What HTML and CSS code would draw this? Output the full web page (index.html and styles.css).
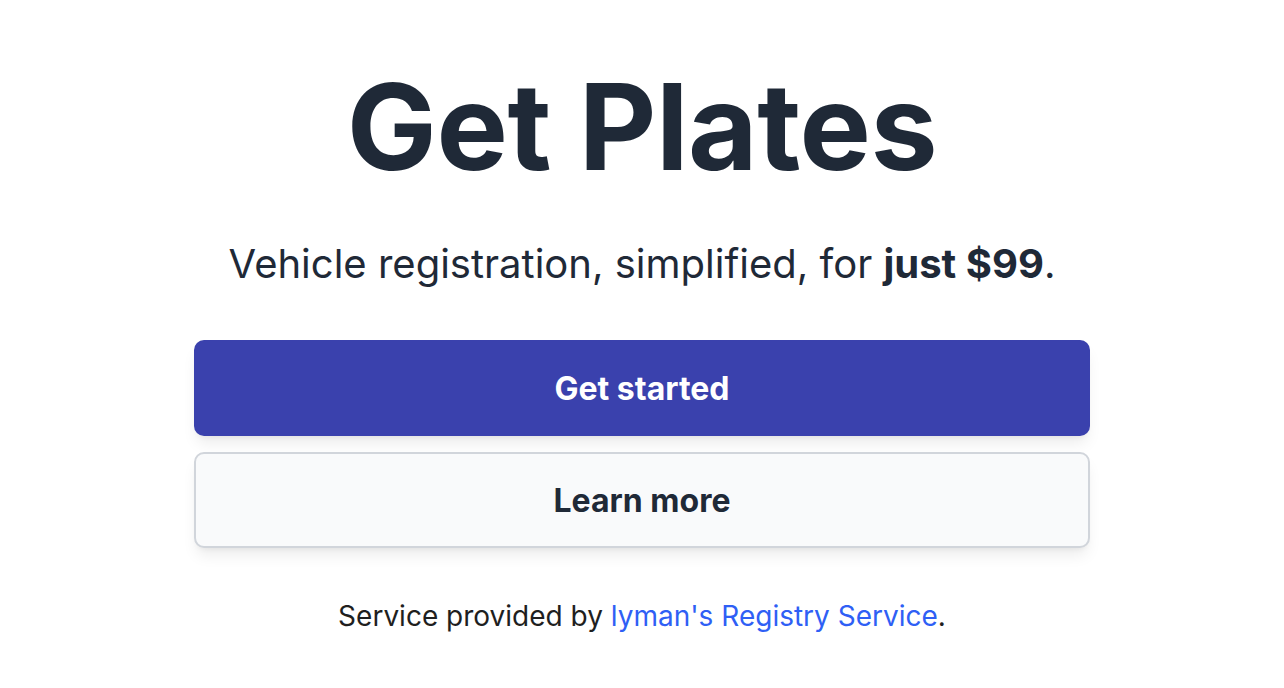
FILE: index.html
```html
<!DOCTYPE html>
<html lang="en">
<head>
<meta charset="utf-8">
<title>Get Plates</title>
<link rel="stylesheet" href="styles.css">
</head>
<body>
<main class="page">
  <h1 class="title">Get Plates</h1>
  <p class="lead">Vehicle registration, simplified, for <strong>just $99</strong>.</p>
  <div class="actions">
    <a class="btn btn-primary" href="#">Get started</a>
    <a class="btn btn-secondary" href="#">Learn more</a>
  </div>
  <p class="footer">Service provided by <a class="link" href="#">lyman's Registry Service</a>.</p>
</main>
</body>
</html>
```
FILE: styles.css
```css
html, body {
  margin: 0;
  padding: 0;
  background: #ffffff;
}
body {
  font-family: "Inter", "Liberation Sans", sans-serif;
  color: #1f2937;
}
.page {
  width: 896px;
  margin: 0 auto;
  padding-top: 60px;
  display: flex;
  flex-direction: column;
  align-items: center;
}
.title {
  margin: 0;
  font-size: 120px;
  line-height: 134px;
  font-weight: 700;
  color: #1f2937;
  letter-spacing: -0.5px;
}
.lead {
  margin: 42px 0 0;
  font-size: 40px;
  line-height: 56px;
  font-weight: 400;
  color: #1f2937;
}
.lead strong {
  font-weight: 700;
}
.actions {
  margin-top: 48px;
  width: 100%;
  display: flex;
  flex-direction: column;
  gap: 16px;
}
.btn {
  display: flex;
  align-items: center;
  justify-content: center;
  height: 96px;
  box-sizing: border-box;
  border-radius: 10px;
  font-size: 32px;
  font-weight: 700;
  text-decoration: none;
  box-shadow: 0 10px 15px -3px rgba(0,0,0,0.08), 0 4px 6px -4px rgba(0,0,0,0.08);
}
.btn-primary {
  background: #3a41ad;
  color: #ffffff;
}
.btn-secondary {
  background: #f9fafb;
  color: #1f2937;
  border: 2px solid #d1d5db;
}
.footer {
  margin: 48px 0 0;
  font-size: 28px;
  line-height: 40px;
  color: #1f1f1f;
}
.link {
  color: #2f5ff5;
  text-decoration: none;
}
```
